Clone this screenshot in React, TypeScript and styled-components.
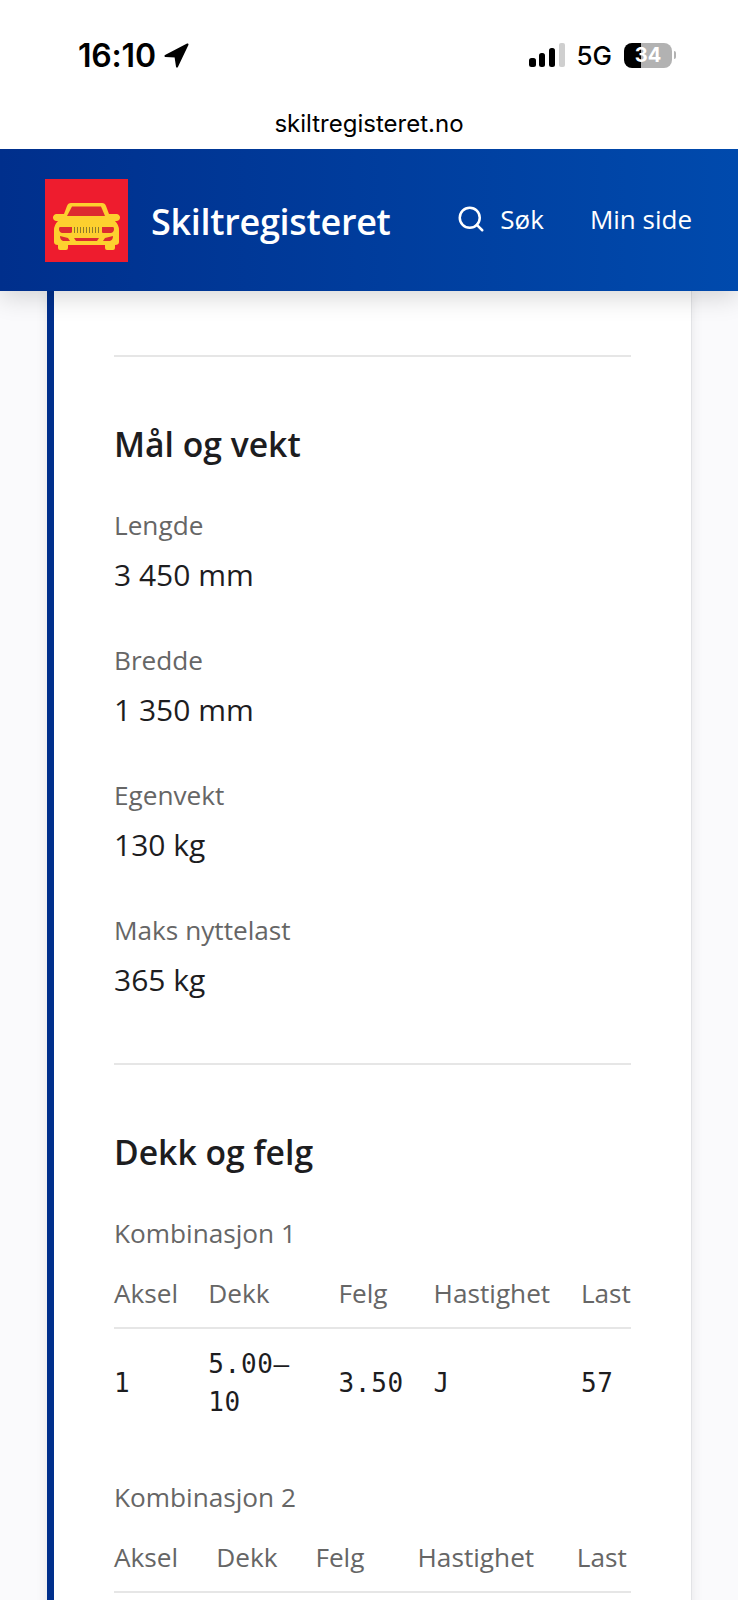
import { createGlobalStyle, styled } from "styled-components";
import { Search } from "lucide-react";

interface Field {
  label: string;
  value: string;
}

interface TyreCombination {
  title: string;
  widths: number[];
  rows: string[][];
}

const FIELDS: Field[] = [
  { label: "Lengde", value: "3 450 mm" },
  { label: "Bredde", value: "1 350 mm" },
  { label: "Egenvekt", value: "130 kg" },
  { label: "Maks nyttelast", value: "365 kg" },
];

const COLUMNS = ["Aksel", "Dekk", "Felg", "Hastighet", "Last"];

const COMBINATIONS: TyreCombination[] = [
  {
    title: "Kombinasjon 1",
    widths: [94, 130, 95, 147, 50],
    rows: [["1", "5.00–10", "3.50", "J", "57"]],
  },
  {
    title: "Kombinasjon 2",
    widths: [102, 99, 102, 159, 54],
    rows: [],
  },
];

const GlobalStyle = createGlobalStyle`
  html, body {
    margin: 0;
    height: 1600px;
    overflow: hidden;
    background: #fafafc;
  }
  body {
    font-family: "Open Sans", sans-serif;
    color: #1d1d1f;
  }
`;

const StatusBar = styled.div`
  height: 110px;
  box-sizing: border-box;
  padding: 40px 62px 0 78px;
  display: flex;
  justify-content: space-between;
  align-items: flex-start;
  background: #fff;
  font-family: Inter, sans-serif;
  color: #000;
`;

const StatusGroup = styled.div`
  height: 30px;
  display: flex;
  align-items: center;
`;

const Clock = styled.span`
  font-size: 32px;
  font-weight: 600;
  letter-spacing: -0.2px;
  margin-right: 8px;
`;

const Network = styled.span`
  font-size: 26px;
  font-weight: 500;
  margin: 0 12px 0 11px;
`;

const Battery = styled.span`
  width: 48px;
  height: 25px;
  border-radius: 8px;
  display: flex;
  align-items: center;
  justify-content: center;
  background: linear-gradient(90deg, #000 35%, #b2b2b2 35%);
  color: #fff;
  font-size: 20px;
  font-weight: 700;
`;

const BatteryNub = styled.span`
  width: 2px;
  height: 8px;
  margin-left: 2px;
  border-radius: 0 2px 2px 0;
  background: #b2b2b2;
`;

const AddressBar = styled.div`
  position: relative;
  z-index: 2;
  height: 39px;
  display: flex;
  justify-content: center;
  align-items: flex-start;
  background: #fff;
  font-family: Inter, sans-serif;
  font-size: 24px;
  line-height: 28px;
  color: #000;
`;

const Header = styled.header`
  position: relative;
  z-index: 1;
  height: 142px;
  box-sizing: border-box;
  padding: 0 46px 0 45px;
  display: flex;
  align-items: center;
  background: linear-gradient(90deg, #002f8c 0%, #004aad 100%);
  box-shadow: 0 6px 24px rgba(0, 0, 0, 0.16);
  color: #fff;
`;

const Logo = styled.svg`
  width: 83px;
  height: 83px;
  flex: none;
`;

const Brand = styled.span`
  margin: 2px 0 0 23px;
  font-size: 36px;
  font-weight: 600;
  letter-spacing: -0.3px;
`;

const Nav = styled.nav`
  margin: -2px 0 0 auto;
  display: flex;
  align-items: center;
`;

const NavLink = styled.a<{ $gap?: number }>`
  display: flex;
  align-items: center;
  gap: 14px;
  margin-left: ${(p) => p.$gap ?? 0}px;
  font-size: 26px;
  color: #fff;
`;

const Main = styled.main`
  padding: 0 46px 0 47px;
`;

const Card = styled.div`
  box-sizing: border-box;
  padding: 64px 60px 0 60px;
  background: #fff;
  border-left: 7px solid #002f8c;
  border-right: 1px solid #e2e3e6;
  box-shadow: 0 0 12px rgba(0, 0, 0, 0.08);
`;

const Section = styled.section`
  border-top: 2px solid #e6e6e6;
  padding-bottom: 65px;
`;

const Heading = styled.h2`
  margin: 65px 0 41px;
  font-size: 33.7px;
  line-height: 44px;
  font-weight: 600;
`;

const FieldBlock = styled.div`
  margin-bottom: 49px;
  &:last-child {
    margin-bottom: 0;
  }
`;

const Label = styled.div`
  font-size: 26.2px;
  line-height: 36px;
  color: #666;
`;

const Value = styled.div`
  margin-top: 14px;
  font-size: 30px;
  line-height: 36px;
`;

const Combination = styled.div`
  margin-bottom: 42px;
`;

const TyreTable = styled.table`
  width: 100%;
  table-layout: fixed;
  border-collapse: collapse;
`;

const HeadCell = styled.th`
  height: 77px;
  padding: 8px 0 0;
  box-sizing: border-box;
  text-align: left;
  font-size: 26.2px;
  font-weight: 400;
  color: #666;
  white-space: nowrap;
  border-bottom: 2px solid #e6e6e6;
`;

const BodyCell = styled.td`
  padding: 16px 28px 16px 0;
  font-family: "DejaVu Sans Mono", monospace;
  font-size: 26px;
  letter-spacing: 0.7px;
  line-height: 38px;
  color: #1d1d1f;
`;

function CarLogo() {
  return (
    <Logo viewBox="0 0 83 83" aria-hidden="true">
      <rect width="83" height="83" fill="#ee1c2e" />
      <path
        fill="#fdd02f"
        d="M26 24H57Q60 24 61 27L64 35H72Q75 36 75 38.5Q75 41 72 42H70Q74 46 74 51V63Q74 66 70 66V69Q70 71 68 71H62Q60 71 60 69V66H23V69Q23 71 21 71H15Q13 71 13 69V66Q9 66 9 63V51Q9 46 13 42H11Q8 41 8 38.5Q8 36 11 35H19L22 27Q23 24 26 24Z"
      />
      <path fill="#dd2a30" d="M27 27.5H56L60 37H22Z" />
      <path
        fill="#dd2a30"
        d="M15 48H27V53Q27 54 25 54H17Q14 53 14 50Q14 48 15 48ZM57 48H68Q69 48 69 50Q69 53 66 54H58Q57 54 57 53Z"
      />
      <path
        fill="#dd2a30"
        d="M15 57L23 59L25 62H18Q15 61 15 57ZM68 57L60 59L58 62H65Q68 61 68 57ZM29 59H54L52 62H31Z"
      />
      <path
        stroke="#8d7a2c"
        strokeWidth="1"
        d="M29.5 48V54M32.5 48V54M35.5 48V54M38.5 48V54M41.5 48V54M44.5 48V54M47.5 48V54M50.5 48V54M53.5 48V54"
      />
    </Logo>
  );
}

function SignalIcon() {
  return (
    <svg width="36" height="24" viewBox="0 0 36 24" aria-hidden="true">
      <rect x="0" y="15" width="7" height="9" rx="2.5" fill="#000" />
      <rect x="10" y="10" width="6" height="14" rx="2.5" fill="#000" />
      <rect x="20" y="5" width="6" height="19" rx="2.5" fill="#000" />
      <rect x="30" y="0" width="6" height="24" rx="2" fill="#cfcfcf" />
    </svg>
  );
}

function LocationIcon() {
  return (
    <svg width="25" height="25" viewBox="0 0 25 25" aria-hidden="true">
      <path
        d="M23.5 1.5L1.5 13L11.5 13.5L13 23.5Z"
        fill="#000"
        stroke="#000"
        strokeWidth="2"
        strokeLinejoin="round"
      />
    </svg>
  );
}

export default function App() {
  return (
    <>
      <GlobalStyle />
      <StatusBar>
        <StatusGroup>
          <Clock>16:10</Clock>
          <LocationIcon />
        </StatusGroup>
        <StatusGroup>
          <SignalIcon />
          <Network>5G</Network>
          <Battery>34</Battery>
          <BatteryNub />
        </StatusGroup>
      </StatusBar>
      <AddressBar>skiltregisteret.no</AddressBar>
      <Header>
        <CarLogo />
        <Brand>Skiltregisteret</Brand>
        <Nav>
          <NavLink>
            <Search size={30} strokeWidth={2} />
            Søk
          </NavLink>
          <NavLink $gap={46}>Min side</NavLink>
        </Nav>
      </Header>
      <Main>
        <Card>
          <Section>
            <Heading>Mål og vekt</Heading>
            {FIELDS.map((field) => (
              <FieldBlock key={field.label}>
                <Label>{field.label}</Label>
                <Value>{field.value}</Value>
              </FieldBlock>
            ))}
          </Section>
          <Section>
            <Heading>Dekk og felg</Heading>
            {COMBINATIONS.map((combination) => (
              <Combination key={combination.title}>
                <Label>{combination.title}</Label>
                <TyreTable>
                  <colgroup>
                    {combination.widths.map((width, idx) => (
                      <col key={idx} width={width} />
                    ))}
                  </colgroup>
                  <thead>
                    <tr>
                      {COLUMNS.map((column) => (
                        <HeadCell key={column}>{column}</HeadCell>
                      ))}
                    </tr>
                  </thead>
                  <tbody>
                    {combination.rows.map((row) => (
                      <tr key={row[0]}>
                        {row.map((cell, idx) => (
                          <BodyCell key={idx}>{cell}</BodyCell>
                        ))}
                      </tr>
                    ))}
                  </tbody>
                </TyreTable>
              </Combination>
            ))}
          </Section>
        </Card>
      </Main>
    </>
  );
}
